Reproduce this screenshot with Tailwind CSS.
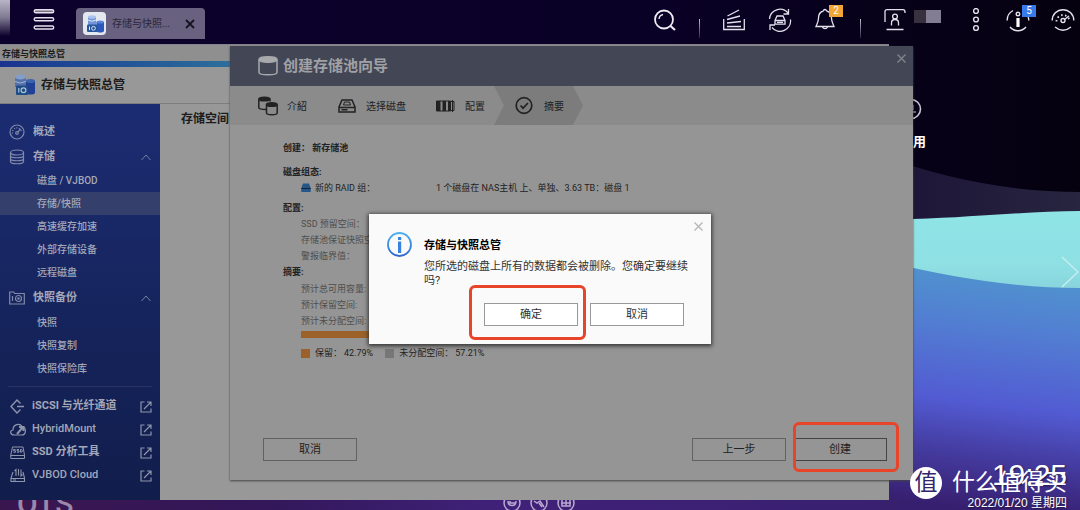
<!DOCTYPE html>
<html lang="zh-CN">
<head>
<meta charset="utf-8">
<title>存储与快照总管</title>
<script src="https://cdn.jsdelivr.net/npm/@tailwindcss/browser@4"></script>
</head>
<body class="relative min-h-screen overflow-hidden bg-[#090122] font-['Roboto','Noto_Sans_CJK_SC',sans-serif] text-[11px] text-white">

<!-- Wallpaper -->
<svg class="absolute inset-0 h-full w-full" viewBox="0 0 1080 510" preserveAspectRatio="none" aria-hidden="true">
  <defs>
    <linearGradient id="sky"><stop offset="0" stop-color="#0c012c"/><stop offset=".6" stop-color="#0a0127"/><stop offset="1" stop-color="#05010f"/></linearGradient>
    <linearGradient id="hill"><stop offset="0" stop-color="#1c1336"/><stop offset="1" stop-color="#272540"/></linearGradient>
    <linearGradient id="cyan" x2="0" y2="1"><stop offset="0" stop-color="#8fe4e6"/><stop offset=".5" stop-color="#8ee0e3"/><stop offset=".8" stop-color="#86cfdb"/></linearGradient>
    <linearGradient id="sea" gradientUnits="userSpaceOnUse" x1="1020" y1="262" x2="990" y2="510"><stop offset="0" stop-color="#4f98cd"/><stop offset=".28" stop-color="#527dd2"/><stop offset=".58" stop-color="#525bd2"/><stop offset=".76" stop-color="#463fa6"/><stop offset="1" stop-color="#371f70"/></linearGradient>
    <linearGradient id="floor"><stop offset="0" stop-color="#3a164f"/><stop offset=".3" stop-color="#33175a"/><stop offset=".55" stop-color="#402179"/><stop offset="1" stop-color="#38206f"/></linearGradient>
    <linearGradient id="glow" x2="0" y2="1"><stop offset="0" stop-color="#b9b5c6"/><stop offset=".5" stop-color="#7d7890"/><stop offset="1" stop-color="#0c012c"/></linearGradient>
  </defs>
  <rect width="1080" height="510" fill="url(#sky)"/>
  <rect width="10" height="36" fill="url(#glow)"/>
  <path d="M880 155Q980 192 1080 192V300H880z" fill="url(#hill)"/>
  <path d="M880 220L913 219C980 217 1030 211 1080 211V320H880z" fill="url(#cyan)"/>
  <path d="M880 260Q990 288 1080 288V510H880z" fill="url(#sea)"/>
  <rect y="498" width="900" height="12" fill="url(#floor)"/>
</svg>

<!-- Desktop items lying under the windows -->
<svg class="absolute top-[98px] right-[158px] size-[22px]" viewBox="0 0 22 22" fill="none" stroke="#c9c6d4" stroke-width="1.600" aria-hidden="true"><circle cx="11" cy="11" r="9.500"/><path d="M8 14h8M13 7v5" stroke-width="1.300" stroke="#8d889c"/></svg>
<span class="absolute top-[132px] right-[154px] text-[13px] leading-5 font-bold">用</span>
<span class="absolute bottom-[-10px] left-[17px] text-[30px] leading-8 font-medium text-[#9c88ab]">QTS</span>
<div class="absolute bottom-[-2px] left-1/2 ml-[-37px] flex gap-[9px]" aria-hidden="true">
  <svg class="size-[18px]" viewBox="0 0 18 18" fill="none" stroke="#b8a9d0" stroke-width="1.5"><circle cx="9" cy="9" r="8"/><path d="M5 7c0 6 8 6 8 0M7 7v2h5"/></svg>
  <svg class="size-[18px]" viewBox="0 0 18 18" fill="none" stroke="#b8a9d0" stroke-width="1.5"><circle cx="9" cy="9" r="8"/><path d="M4 7l3 2 3-2 4 6M9 9l3 4"/></svg>
  <svg class="size-[18px]" viewBox="0 0 18 18" fill="none" stroke="#b8a9d0" stroke-width="1.5"><circle cx="9" cy="9" r="8"/><path d="M5 5h8v7H5zM9 5v7M4 9h10"/></svg>
</div>
<button class="absolute top-[256px] right-[1px]" aria-label="下一页"><svg class="h-8 w-[18px]" viewBox="0 0 18 32" fill="none" stroke="#c5eef0" stroke-width="1.500"><path d="M1 1l16 15L1 31"/></svg></button>

<!-- Top bar -->
<header class="relative flex h-[44px] items-start pr-[5px] pl-[33px]">
  <button class="mt-[8px]" aria-label="主菜单"><svg class="h-6 w-[22px]" viewBox="0 0 22 24" fill="none" stroke="#e4e1ec" stroke-width="1.400"><rect x="1.200" y="1.700" width="19.500" height="3" rx="1.500" fill="#777284"/><rect x="1.200" y="9.700" width="19.500" height="3" rx="1.500"/><rect x="1.200" y="18" width="19.500" height="3" rx="1.500"/></svg></button>
  <div class="mt-[8px] ml-[21px] flex h-[31px] w-[129px] items-center rounded-t bg-[#68617f] px-[7px] text-[10px] text-[#2c2739]">
    <svg class="size-6 shrink-0" viewBox="0 0 24 24" aria-hidden="true"><rect width="23" height="23" rx="4" fill="#e3e8ef"/><path d="M5 5v8h8V5" fill="#7394d8"/><ellipse cx="9" cy="5" rx="4" ry="1.800" fill="#a9c2ee"/><path d="M5 8q4 2.500 8 0" stroke="#dbe7f7" fill="none"/><path d="M13.500 10v9c1 2 6.500 2 7.500 0v-9" fill="#2c57bd"/><ellipse cx="17.200" cy="10" rx="3.800" ry="1.600" fill="#5685dc"/><rect x="4" y="12.500" width="10.500" height="7.500" rx="1" fill="#28569b"/><circle cx="10.500" cy="16.300" r="1.900" fill="none" stroke="#dbe7f7"/><path d="M6.500 14.500v3.600" stroke="#dbe7f7"/></svg>
    <span class="ml-[5px]">存储与快照...</span>
    <button class="ml-auto pr-[3px]" aria-label="关闭标签"><svg class="size-[10px]" viewBox="0 0 10 10" stroke="#17131f" stroke-width="1.800"><path d="M1 1l8 8M9 1L1 9"/></svg></button>
  </div>
  <nav class="ml-auto flex items-start pt-[8px]" aria-label="系统工具">
    <button aria-label="搜索"><svg class="size-6" viewBox="0 0 24 24" fill="none" stroke="#eeecf4" stroke-width="1.800"><circle cx="11" cy="11.500" r="9"/><path d="M17.500 18l4.500 4" stroke-width="2.200"/><path d="M6 11a5 5 0 0 1 4-4.500" stroke-width="1.300"/></svg></button>
    <span class="mx-[22px] mt-[11px] h-[19px] w-px bg-linear-to-b from-[#c5c2cd] to-[#2d2744]"></span>
    <button aria-label="后台任务"><svg class="size-6" viewBox="0 0 24 24" fill="none" stroke="#e4e1ec" stroke-width="1.300"><path d="M1.700 11v10.500h20.600V11M5 18.500h14M5 15l14-1.500M5 11.500L18 8M5.500 8L17 2"/></svg></button>
    <button class="ml-[22px]" aria-label="同步"><svg class="size-6" viewBox="0 0 24 24" fill="none" stroke="#e4e1ec" stroke-width="1.300"><path d="M1.500 11A10.500 10.500 0 0 1 20 5M22.500 11.500A10.500 10.500 0 0 1 4 19.500M20.500 1v5h-5M2 22v-5h5M7 12.500L9 8h6l2 4.500v3.700H7zM7 12.500h10M9 14.400h6"/></svg></button>
    <button class="relative ml-[22px]" aria-label="通知，2 条"><svg class="size-6" viewBox="0 0 24 24" fill="none" stroke="#e4e1ec" stroke-width="1.300"><path d="M9.500 3c-4 1-5 4-5 7 0 4-1.500 6-2.500 8.500h18C19 16 17.500 14 17.500 10c0-3-1-6-5-7M9.500 3a1.500 1.500 0 0 1 3 0M8.500 19a2.700 2.700 0 0 0 5 0"/></svg><span class="absolute top-[-3px] left-[15px] h-3 w-[14px] bg-[#f0a536] text-[10px] leading-3">2</span></button>
    <span class="mx-[22px] mt-[11px] h-[19px] w-px bg-linear-to-b from-[#c5c2cd] to-[#2d2744]"></span>
    <button class="flex" aria-label="用户"><svg class="size-6" viewBox="0 0 24 24" fill="none" stroke="#e4e1ec" stroke-width="1.300"><path d="M2 14V3.500Q2 1.700 4 1.700h16Q22 1.700 22 4v1M3.500 21.500h17"/><circle cx="12" cy="8.500" r="2.400"/><path d="M8.500 17.500v-2.500q0-3.500 3.500-3.500t3.500 3.500v2.500"/></svg><span class="mt-[2px] ml-[7px] h-[13px] w-3 bg-[#37313f]"></span><span class="mt-[2px] h-[13px] w-[15px] bg-[#827d93]"></span></button>
    <button class="ml-[23px]" aria-label="更多"><svg class="size-6" viewBox="0 0 24 24" fill="none" stroke="#e4e1ec" stroke-width="1.400"><circle cx="12" cy="3" r="2.400"/><circle cx="12" cy="11.500" r="2.400"/><circle cx="12" cy="20" r="2.400"/></svg></button>
    <button class="relative ml-[18px]" aria-label="信息，5 条"><svg class="size-6" viewBox="0 0 24 24" fill="none" stroke="#e4e1ec" stroke-width="1.400"><path d="M4 19A10.500 10.500 0 0 0 20 19M1.200 12.500A11 11 0 0 1 7 2.500M22.800 12.500q0-2-.7-3.500"/><circle cx="12" cy="6" r="1.800"/><path d="M12 10v9" stroke-width="3.200" stroke="#fff"/></svg><span class="absolute top-[-3px] left-[16px] h-3 w-[14px] bg-[#377bea] text-[10px] leading-3">5</span></button>
    <button class="ml-[21px]" aria-label="仪表盘"><svg class="size-6" viewBox="0 0 24 24" fill="none" stroke="#e4e1ec" stroke-width="1.400"><path d="M1.200 12.500a10.800 10.800 0 1 1 21.600 0M4 19q8 6.500 16 0"/><path d="M5.500 13.500a6.500 6.500 0 0 1 13 0" stroke-dasharray="1.500 2.500" stroke-width="1.800"/><circle cx="12" cy="12.500" r="2"/><path d="M13.500 11.500L18 8"/></svg></button>
  </nav>
</header>

<!-- Storage manager window -->
<section class="absolute top-[44px] right-[191px] bottom-[10px] left-0 flex flex-col border-t border-[#85828f] bg-[#989898] text-[#1c1c1c]">
  <div class="h-4 bg-[#8f8f8f] pt-px pl-[2px] text-[9px] leading-4 font-bold">存储与快照总管</div>
  <div class="h-[6px] bg-linear-to-r from-[#1b3390] via-[#3f8c9e] via-40% to-[#3f9aa0]"></div>
  <div class="flex h-[37px] items-center border-b border-[#7d7d7d] pl-[14px]">
    <svg class="size-[22px]" viewBox="0 0 22 22" aria-hidden="true"><path d="M1 3v10h11V3" fill="#5471ab"/><path d="M12 7v12c1 2 8 2 9 0V7" fill="#1f4094"/><ellipse cx="6.500" cy="3" rx="5.500" ry="2.500" fill="#839fc9"/><ellipse cx="16.500" cy="7" rx="4.500" ry="2" fill="#3a64ae"/><path d="M1 7.500q5 3 11 0" stroke="#a4b5d3" fill="none"/><rect x="2" y="11.500" width="12" height="9.500" rx="1" fill="#1f4d85"/><circle cx="9.500" cy="16.200" r="2.400" fill="none" stroke="#afc1d5" stroke-width="1.200"/><path d="M4.800 14v4.500" stroke="#afc1d5" stroke-width="1.200"/></svg>
    <h1 class="ml-[5px] text-[12px] font-bold">存储与快照总管</h1>
  </div>
  <div class="flex min-h-0 flex-1">
    <aside class="w-40 bg-linear-to-b from-[#1c2c72] to-[#111d4b] pt-[14px] text-[#a3a7b8]">
      <a href="#" class="flex h-[25px] items-center pt-[3px] pl-[9px] font-bold"><svg class="mr-2 size-4" viewBox="0 0 16 16" fill="none" stroke="#8189a8" stroke-width="1.200"><circle cx="8" cy="8" r="7"/><path d="M3.500 9.500a4.600 4.600 0 0 1 9-2" stroke-dasharray="1 1.500"/><circle cx="8" cy="9" r="1.300"/><path d="M9 8l2.500-3"/></svg>概述</a>
      <a href="#" class="flex h-[26px] items-center pt-[2px] pl-[9px] font-bold"><svg class="mr-2 size-4" viewBox="0 0 16 16" fill="none" stroke="#8189a8" stroke-width="1.200"><ellipse cx="8" cy="3.500" rx="6.500" ry="2.500"/><path d="M1.500 3.500v9c0 3 13 3 13 0v-9M1.500 6.500c0 3 13 3 13 0M1.500 9.500c0 3 13 3 13 0"/></svg>存储<svg class="mr-[9px] ml-auto h-[7px] w-[10px]" viewBox="0 0 10 7" fill="none" stroke="#7680a3"><path d="M.5 6L5 1l4.500 5"/></svg></a>
      <nav class="text-[10px] leading-[23px] font-medium">
        <a href="#" class="block pl-[37px]">磁盘 / VJBOD</a>
        <a href="#" class="block bg-[#343f6b] pl-[37px]">存储/快照</a>
        <a href="#" class="block pl-[37px]">高速缓存加速</a>
        <a href="#" class="block pl-[37px]">外部存储设备</a>
        <a href="#" class="block pl-[37px]">远程磁盘</a>
      </nav>
      <a href="#" class="flex h-[27px] items-center pt-px pl-[9px] font-bold"><svg class="mr-2 size-4" viewBox="0 0 16 16" fill="none" stroke="#8189a8" stroke-width="1.200"><path d="M.7 14V2h4l1 1.500h9.600V14zM3.500 6v5"/><circle cx="9.500" cy="8.500" r="3"/><circle cx="9.500" cy="8.500" r=".7"/></svg>快照备份<svg class="mr-[9px] ml-auto h-[7px] w-[10px]" viewBox="0 0 10 7" fill="none" stroke="#7680a3"><path d="M.5 6L5 1l4.500 5"/></svg></a>
      <nav class="text-[10px] leading-[23px] font-medium">
        <a href="#" class="block pl-[37px]">快照</a>
        <a href="#" class="block pl-[37px]">快照复制</a>
        <a href="#" class="block pl-[37px]">快照保险库</a>
      </nav>
      <hr class="mx-2 mt-[6px] mb-[7px] border-[#28345f]">
      <nav class="font-bold">
        <a href="#" class="flex h-[23px] items-center pt-[2px] pr-2 pl-[10px]"><svg class="mr-[6px] size-4" viewBox="0 0 16 16" fill="none" stroke="#8f95aa" stroke-width="1.400"><path d="M10.500 4.500L7 1 1 7.500 7 14l3.500-3.500M7 7.500h7"/></svg>iSCSI 与光纤通道<svg class="ml-auto size-3" viewBox="0 0 12 12" fill="none" stroke="#8f95aa" stroke-width="1.200"><path d="M4.500 1H1v10h10V7.500M7 1h4v4M4 8l7-7"/></svg></a>
        <a href="#" class="flex h-[23px] items-center pt-[2px] pr-2 pl-[10px] font-medium"><svg class="mr-[6px] size-4" viewBox="0 0 16 16" fill="none" stroke="#8f95aa" stroke-width="1.200"><path d="M4 13C0 13-.5 8.500 3 8c0-6 7-7 9-3.500 5 1 4 8.500 0 8.500z"/><path d="M7 12l6-7M9 5h4.500v4" stroke-width="2"/></svg>HybridMount<svg class="ml-auto size-3" viewBox="0 0 12 12" fill="none" stroke="#8f95aa" stroke-width="1.200"><path d="M4.500 1H1v10h10V7.500M7 1h4v4M4 8l7-7"/></svg></a>
        <a href="#" class="flex h-[23px] items-center pt-[2px] pr-2 pl-[10px]"><svg class="mr-[6px] size-4" viewBox="0 0 16 16" fill="none" stroke="#8f95aa" stroke-width="1.100"><path d="M2.500 2h10.500l1.500 8v3.500H.8V10zM.8 10.500h13.700M5.500 4.500H3.500v1.300h2v1.400h-2M9 4.500H7v1.300h2v1.400H7M10.500 4.500v2.700q2 0 2-1.350t-2-1.350" stroke-width="1"/></svg>SSD 分析工具<svg class="ml-auto size-3" viewBox="0 0 12 12" fill="none" stroke="#8f95aa" stroke-width="1.200"><path d="M4.500 1H1v10h10V7.500M7 1h4v4M4 8l7-7"/></svg></a>
        <a href="#" class="flex h-[23px] items-center pt-[2px] pr-2 pl-[10px] font-medium"><svg class="mr-[6px] size-4" viewBox="0 0 16 16" fill="none" stroke="#8f95aa" stroke-width="1.100"><path d="M3 4L1 10v3.500h13.500V10L13 4M1 10.500h13.500M6 8V1.500L4.500 3M8.500 1v6.500M11 1.500V8l1.500-1.500M3 12h3"/></svg>VJBOD Cloud<svg class="ml-auto size-3" viewBox="0 0 12 12" fill="none" stroke="#8f95aa" stroke-width="1.200"><path d="M4.500 1H1v10h10V7.500M7 1h4v4M4 8l7-7"/></svg></a>
      </nav>
    </aside>
    <main class="flex-1 pt-[7px] pl-[21px]"><h2 class="text-[12px] leading-4 font-bold">存储空间</h2></main>
  </div>
</section>

<!-- Pool creation wizard -->
<section class="absolute top-[46px] right-[167px] bottom-[30px] left-[230px] flex flex-col bg-[#959595] text-[#222] shadow-[0_1px_2px_#444]">
  <div class="flex h-10 items-center bg-[#434654] pl-[28px]">
    <svg class="h-5 w-[20px]" viewBox="0 0 20 20" fill="none" stroke="#a8a9ad" stroke-width="1.500"><path d="M1 3.500v13c0 3 18 3 18 0v-13"/><ellipse cx="10" cy="3.500" rx="9" ry="2.700" fill="#a8a9ad"/></svg>
    <h2 class="ml-[5px] text-[15px] font-bold text-[#a0a1a6]">创建存储池向导</h2>
    <button class="mr-[7px] mb-4 ml-auto" aria-label="关闭向导"><svg class="size-[9px]" viewBox="0 0 9 9" stroke="#85868d" stroke-width="1.300"><path d="M.5.5l8 8M8.500.5l-8 8"/></svg></button>
  </div>
  <ol class="flex h-[39px] items-stretch bg-[#8b8b8b] pl-[28px] text-[10px]">
    <li class="flex items-center"><svg class="mr-[9px] size-5" viewBox="0 0 20 20" fill="none" stroke="#222" stroke-width="1.500"><path d="M8 13.500c-4 0-7.200-.5-7.200-2V3.500M12 3.500v2"/><ellipse cx="6.400" cy="3" rx="5.600" ry="1.800" fill="#222"/><path d="M8.500 9v8c0 2.300 10.700 2.300 10.700 0V9"/><ellipse cx="13.800" cy="8.500" rx="5.400" ry="1.800" fill="#222"/></svg><span class="pt-px">介紹</span></li>
    <li class="ml-[31px] flex items-center"><svg class="mr-2 size-5" viewBox="0 0 20 20" fill="none" stroke="#222" stroke-width="1.500"><path d="M4 4h10l3 7v5H1v-5zM1 11.500h16M3.500 13.800h6"/><path d="M5.500 9l1-3h5l1 3z" stroke-width="1"/></svg><span class="pt-px">选择磁盘</span></li>
    <li class="ml-[30px] flex items-center"><svg class="mr-[9px] size-5" viewBox="0 0 20 20" fill="none" stroke="#222"><path d="M.5 5h14v10H.5z" fill="#222"/><path d="M5.500 5.500v9M11 5.500v9" stroke="#8b8b8b" stroke-width="2"/><path d="M14.500 5.500H18v9h-3.500M16.500 4v12"/></svg><span class="pt-px">配置</span></li>
    <li class="ml-[9px] flex items-center bg-[#7c7c7c] pr-[19px] pl-[21px] [clip-path:polygon(0_0,79px_0,100%_50%,79px_100%,0_100%,10px_50%)]" aria-current="step"><svg class="mr-[9px] size-5" viewBox="0 0 20 20" fill="none" stroke="#222" stroke-width="1.700"><circle cx="9" cy="9.500" r="7.800"/><path d="M5.500 9.500l2.500 2.700 5-5.200"/></svg><span class="pt-px">摘要</span></li>
  </ol>
  <div class="flex-1 pt-[15px] pl-[53px] text-[9px] leading-4">
    <p class="font-bold">创建：&nbsp;新存储池</p>
    <h3 class="mt-2 font-bold">磁盘组态:</h3>
    <div class="flex pl-[18px]"><span class="flex w-[135px] items-center"><svg class="mr-1 size-[10px]" viewBox="0 0 10 10" aria-hidden="true"><path d="M2 .5h6L9.700 5v4H.3V5z" fill="#255687"/><path d="M.3 5.500h9.400" stroke="#15243a"/></svg>新的 RAID 组：</span><span>1 个磁盘在 NAS主机 上、单独、3.63 TB：磁盘 1</span></div>
    <h3 class="mt-1 font-bold">配置:</h3>
    <div class="pl-[18px] text-[#4e4e4e]"><p>SSD 预留空间：</p><p>存储池保证快照空间：</p><p>警报临界值：</p></div>
    <h3 class="font-bold">摘要:</h3>
    <div class="mt-px pl-[18px] text-[#4e4e4e]"><p>预计总可用容量:</p><p>预计保留空间:</p><p>预计未分配空间:</p></div>
    <div class="mt-[2px] ml-[18px] flex h-[7px] w-[380px] bg-[#777]"><div class="bg-[#9c6128]" style="width:42.79%"></div></div>
    <div class="mt-[7px] flex items-center pl-[18px]"><span class="mr-[5px] size-[9px] bg-[#9c6128]"></span><span>保留：</span><span class="ml-[2px]">42.79%</span><span class="mr-[5px] ml-3 size-[9px] bg-[#777]"></span><span>未分配空间：</span><span class="ml-[2px]">57.21%</span></div>
  </div>
  <footer class="flex gap-[7px] pr-[26px] pb-[19px] pl-[33px]">
    <button class="mr-auto h-[23px] w-[94px] border border-[#626262] pt-[2px]">取消</button>
    <button class="h-[23px] w-[94px] border border-[#626262] pt-[2px]">上一步</button>
    <div class="relative"><button class="h-[23px] w-[94px] border border-[#444] pt-[2px]">创建</button><span class="pointer-events-none absolute -top-4 -right-3 -bottom-[11px] left-0 rounded-md border-[3px] border-[#e8442a]"></span></div>
  </footer>
</section>

<!-- Confirmation dialog -->
<div role="dialog" aria-labelledby="dlg-title" class="absolute top-[214px] left-[369px] flex w-[342px] bg-[#fafafa] pt-[18px] pb-[18px] pl-[18px] text-[#333] shadow-[0_1px_4px_1px_#333]">
  <svg class="size-[26px] shrink-0" viewBox="0 0 26 26" aria-hidden="true"><defs><linearGradient id="info" x2="0" y2="1"><stop offset="0" stop-color="#4fb0f0"/><stop offset="1" stop-color="#2c68d0"/></linearGradient></defs><circle cx="12.500" cy="12.500" r="11.500" fill="none" stroke="url(#info)" stroke-width="1.800"/><path d="M11 5h3.200v3H11zM11 9.500h3.200V21H11z" fill="#3a82e0"/></svg>
  <div class="ml-[11px] flex-1 pt-[6px]">
    <h2 id="dlg-title" class="leading-4 font-bold text-black">存储与快照总管</h2>
    <p class="mt-[6px] mr-[20px] leading-[14px]">您所选的磁盘上所有的数据都会被删除。您确定要继续吗?</p>
    <div class="mt-[15px] mr-[27px] flex justify-end gap-3">
      <div class="relative"><button class="h-[23px] w-[94px] border border-[#999] bg-white pt-[2px]">确定</button><span class="pointer-events-none absolute -top-[18px] -right-2 -bottom-[14px] -left-[15px] rounded-md border-[3px] border-[#e8442a]"></span></div>
      <button class="h-[23px] w-[94px] border border-[#999] bg-white pt-[2px]">取消</button>
    </div>
  </div>
  <button class="absolute top-[8px] right-[8px]" aria-label="关闭"><svg class="size-[9px]" viewBox="0 0 9 9" stroke="#b5b5b5" stroke-width="1.300"><path d="M.5.5l8 8M8.500.5l-8 8"/></svg></button>
</div>

<!-- Clock and watermark -->
<div class="absolute right-[13px] bottom-[-1px] text-right font-['Liberation_Sans','Noto_Sans_CJK_SC',sans-serif] [text-shadow:1px_1px_2px_#0008]">
  <div class="text-[30px] leading-7">19:25</div>
  <div class="mt-[6px] text-[12px] leading-4">2022/01/20 星期四</div>
</div>
<div class="absolute right-[13px] bottom-[11px] flex items-center text-[23px] leading-8">
  <span class="mr-[10px] size-8 rounded-full bg-white text-center text-[23px] leading-[31px] text-[#32256b]">值</span>什么值得买
</div>
</body>
</html>
